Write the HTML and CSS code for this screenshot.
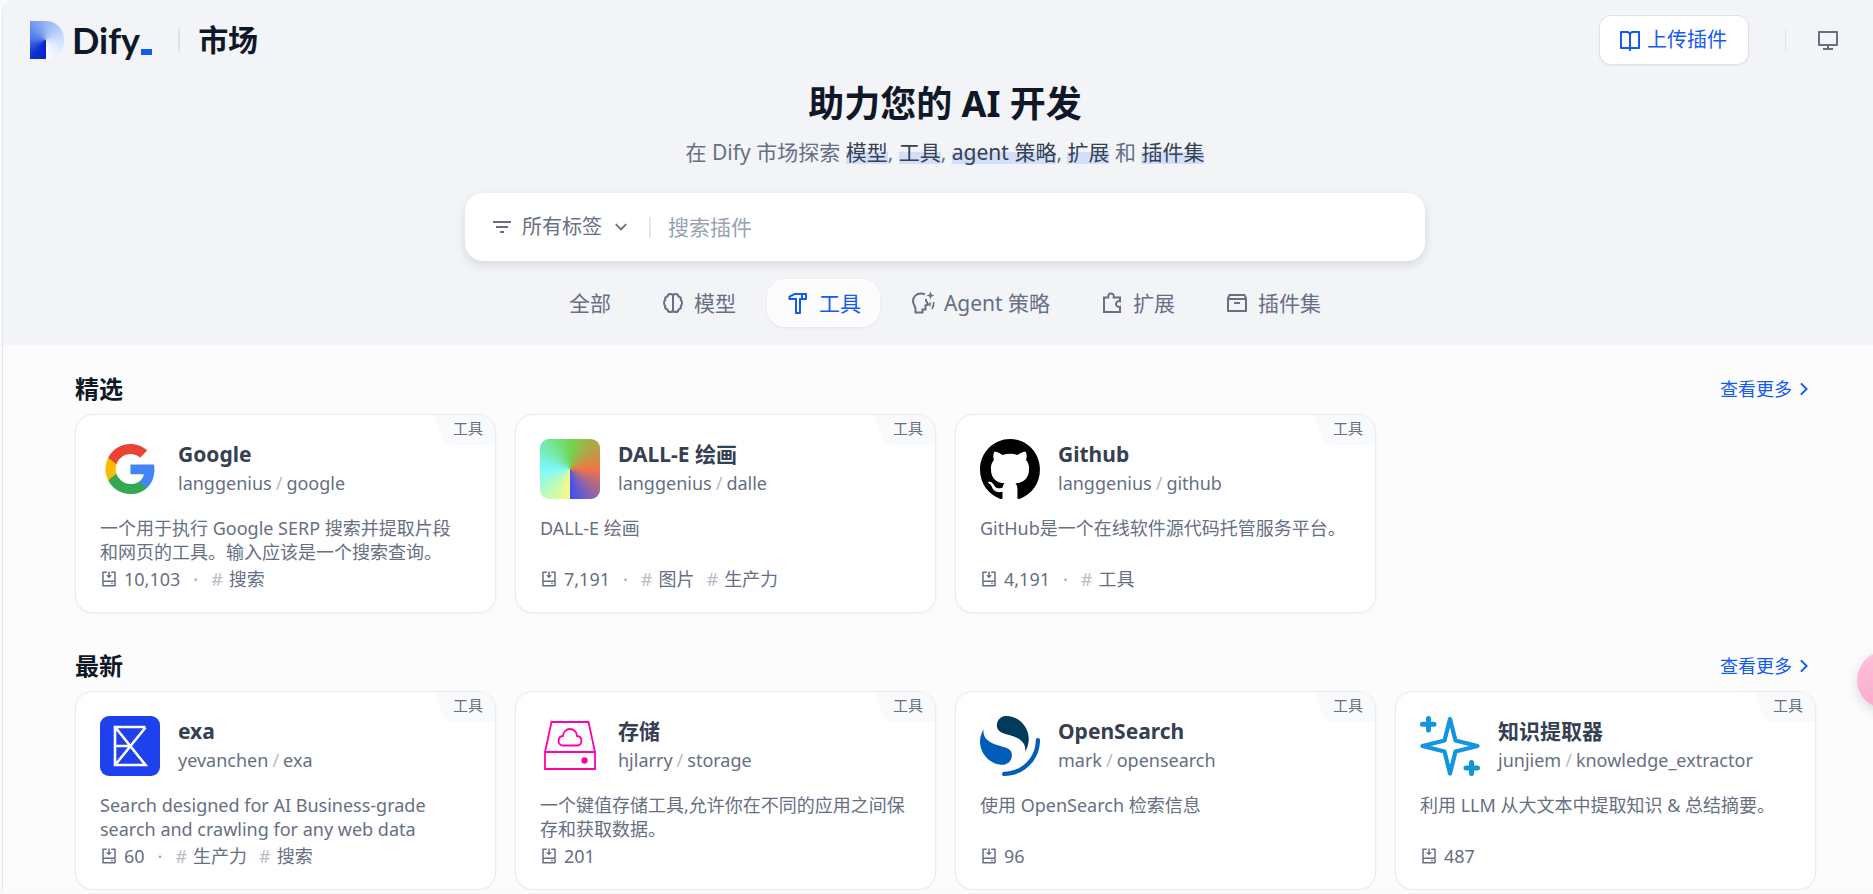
FILE: index.html
```html
<!DOCTYPE html>
<html lang="zh-Hans">
<head>
  <meta charset="UTF-8">
  <meta name="viewport" content="width=device-width, initial-scale=1">
  <title>Dify 市场</title>
  <link rel="stylesheet" href="styles.css">
</head>
<body>

<svg class="sprite" aria-hidden="true">
  <symbol id="install" viewBox="0 0 24 24">
    <path d="M9 2V4H5V14H19V4H15V2H20C20.55 2 21 2.45 21 3V21C21 21.55 20.55 22 20 22H4C3.45 22 3 21.55 3 21V3C3 2.45 3.45 2 4 2H9ZM19 16H5V20H19V16ZM17 17V19H15V17H17ZM13 2V7H16L12 11L8 7H11V2H13Z"/>
  </symbol>
  <symbol id="arrow-right" viewBox="0 0 24 24">
    <path d="M13.17 12L8.22 7.05L9.64 5.64L16 12L9.64 18.36L8.22 16.95L13.17 12Z"/>
  </symbol>
  <symbol id="corner" viewBox="0 0 20 30">
    <path d="M0 0H20V30H18C14 30 12 28 10 24Z"/>
  </symbol>
</svg>

<div class="page">
  <div class="top">
    <header class="header">
      <a class="logo" href="#">
        <span class="logo-mark"></span>
        <span class="logo-text">Dify</span>
        <span class="logo-dash"></span>
      </a>
      <span class="header-line"></span>
      <span class="market">市场</span>
      <div class="header-right">
        <button class="upload" type="button">
          <svg class="icon" viewBox="0 0 24 24"><path d="M13 21V23H11V21H3C2.45 21 2 20.55 2 20V4C2 3.45 2.45 3 3 3H9C10.19 3 11.27 3.52 12 4.35C12.73 3.52 13.81 3 15 3H21C21.55 3 22 3.45 22 4V20C22 20.55 21.55 21 21 21H13ZM20 19V5H15C13.9 5 13 5.9 13 7V19H20ZM11 19V7C11 5.9 10.1 5 9 5H4V19H11Z"/></svg>
          上传插件
        </button>
        <span class="header-line thin"></span>
        <button class="theme" type="button" aria-label="主题">
          <svg class="icon" viewBox="0 0 24 24"><path d="M4 16H20V5H4V16ZM13 18V20H17V22H7V20H11V18H2.99C2.44 18 2 17.55 2 16.99V4.01C2 3.45 2.46 3 2.99 3H21.01C21.56 3 22 3.45 22 4.01V16.99C22 17.55 21.54 18 21.01 18H13Z"/></svg>
        </button>
      </div>
    </header>

    <div class="hero">
      <h1>助力您的 AI 开发</h1>
      <p class="subtitle">在 Dify 市场探索 <em>模型</em>, <em>工具</em>, <em>agent 策略</em>, <em>扩展</em> 和 <em>插件集</em></p>

      <div class="search">
        <button class="tags-button" type="button">
          <svg class="icon" viewBox="0 0 24 24"><path d="M10 18H14V16H10V18ZM3 6V8H21V6H3ZM6 13H18V11H6V13Z"/></svg>
          所有标签
          <svg class="icon small" viewBox="0 0 24 24"><path d="M12 13.17L16.95 8.22L18.36 9.64L12 16L5.64 9.64L7.05 8.22L12 13.17Z"/></svg>
        </button>
        <span class="search-line"></span>
        <input type="text" placeholder="搜索插件" aria-label="搜索插件">
      </div>

      <nav class="tabs">
        <button type="button">全部</button>
        <button type="button">
          <svg class="icon line" viewBox="0 0 24 24"><path d="M12 5C12 3.6 10.8 3 9.5 3C7.8 3 6.6 4 6.4 5.5C4.6 6 3.8 7.4 4.2 9C2.6 10.3 2.6 13.7 4.2 15C3.8 16.6 4.6 18 6.4 18.5C6.6 20 7.8 21 9.5 21C10.8 21 12 20.4 12 19ZM12 5C12 3.6 13.2 3 14.5 3C16.2 3 17.4 4 17.6 5.5C19.4 6 20.2 7.4 19.8 9C21.4 10.3 21.4 13.7 19.8 15C20.2 16.6 19.4 18 17.6 18.5C17.4 20 16.2 21 14.5 21C13.2 21 12 20.4 12 19"/></svg>
          模型
        </button>
        <button class="active" type="button">
          <svg class="icon" viewBox="0 0 24 24"><path d="M20 2C20.55 2 21 2.45 21 3V8C21 8.55 20.55 9 20 9H15V22C15 22.55 14.55 23 14 23H10C9.45 23 9 22.55 9 22V9H3.5C2.95 9 2.5 8.55 2.5 8V5.62C2.5 5.24 2.71 4.89 3.05 4.72L8.5 2H20ZM15 4H8.97L4.5 6.24V7H11V21H13V7H15V4ZM19 4H17V7H19V4Z"/></svg>
          工具
        </button>
        <button type="button">
          <svg class="icon line" viewBox="0 0 24 24"><path d="M14 3.4C12.8 2.8 11.6 2.5 10 2.5C5.5 2.5 2 5.7 2 10C2 13.5 4.5 14.8 4.5 18V21.5H11.500V18.5H14.500V14.500L17 13.500L15 9.500V8"/><path class="arcs" d="M19 11.500C19.300 12.800 19.200 14 18.600 15.200M22.700 11C22.900 13.700 22.300 16 21 18"/><path class="solid" d="M19.500 .500L20.600 3.400L23.500 4.500L20.600 5.600L19.500 8.500L18.400 5.600L15.500 4.500L18.400 3.400Z"/></svg>
          Agent 策略
        </button>
        <button type="button">
          <svg class="icon line" viewBox="0 0 24 24"><path d="M4 6.5H8.3C7.8 3.9 9 2.5 11 2.5S14.2 3.9 13.7 6.5H20V10.2C17.6 9.8 16 11 16 13S17.6 16.2 20 15.8V21H4Z"/></svg>
          扩展
        </button>
        <button type="button">
          <svg class="icon" viewBox="0 0 24 24"><path d="M20 3L22 7V20C22 20.55 21.55 21 21 21H3C2.45 21 2 20.55 2 20V7L4 3H20ZM20 9H4V19H20V9ZM18.76 5H5.24L4.24 7H19.76L18.76 5ZM9 11H15V13H9Z"/></svg>
          插件集
        </button>
      </nav>
    </div>
  </div>

  <main class="content">
    <section>
      <div class="section-head">
        <h2>精选</h2>
        <a href="#">查看更多 <svg><use href="#arrow-right"/></svg></a>
      </div>
      <div class="cards">
        <article class="card">
          <div class="badge"><svg><use href="#corner"/></svg><span>工具</span></div>
          <div class="card-head">
            <svg class="card-icon" viewBox="-1.4 -1.2 26.4 26.4">
              <path fill="#4285f4" d="M22.56 12.25c0-.78-.07-1.53-.2-2.25H12v4.26h5.92c-.26 1.37-1.04 2.53-2.21 3.31v2.77h3.57c2.08-1.92 3.28-4.74 3.28-8.09z"/>
              <path fill="#34a853" d="M12 23c2.97 0 5.46-.98 7.28-2.66l-3.57-2.77c-.98.66-2.23 1.06-3.71 1.06-2.86 0-5.29-1.93-6.16-4.53H2.18v2.84C3.99 20.53 7.7 23 12 23z"/>
              <path fill="#fbbc05" d="M5.84 14.09c-.22-.66-.35-1.36-.35-2.09s.13-1.43.35-2.09V7.07H2.18C1.43 8.55 1 10.22 1 12s.43 3.45 1.18 4.93l3.66-2.84z"/>
              <path fill="#ea4335" d="M12 5.38c1.62 0 3.06.56 4.21 1.64l3.15-3.15C17.45 2.09 14.97 1 12 1 7.7 1 3.99 3.47 2.18 7.07l3.66 2.84c.87-2.6 3.3-4.53 6.16-4.53z"/>
            </svg>
            <div>
              <h3>Google</h3>
              <p class="org">langgenius<i>/</i>google</p>
            </div>
          </div>
          <p class="desc">一个用于执行 Google SERP 搜索并提取片段和网页的工具。输入应该是一个搜索查询。</p>
          <div class="meta"><svg><use href="#install"/></svg>10,103<span class="dot">·</span><span class="tag"><i>#</i>搜索</span></div>
        </article>

        <article class="card">
          <div class="badge"><svg><use href="#corner"/></svg><span>工具</span></div>
          <div class="card-head">
            <div class="card-icon dalle"></div>
            <div>
              <h3>DALL-E 绘画</h3>
              <p class="org">langgenius<i>/</i>dalle</p>
            </div>
          </div>
          <p class="desc">DALL-E 绘画</p>
          <div class="meta"><svg><use href="#install"/></svg>7,191<span class="dot">·</span><span class="tag"><i>#</i>图片</span><span class="tag"><i>#</i>生产力</span></div>
        </article>

        <article class="card">
          <div class="badge"><svg><use href="#corner"/></svg><span>工具</span></div>
          <div class="card-head">
            <svg class="card-icon" viewBox="0 0 97.7 96" preserveAspectRatio="none">
              <path d="M48.854 0C21.839 0 0 22 0 49.217c0 21.756 13.993 40.172 33.405 46.69 2.427.49 3.316-1.059 3.316-2.362 0-1.141-.08-5.052-.08-9.127-13.59 2.934-16.42-5.867-16.42-5.867-2.184-5.704-5.42-7.17-5.42-7.17-4.448-3.015.324-3.015.324-3.015 4.934.326 7.523 5.052 7.523 5.052 4.367 7.496 11.404 5.378 14.235 4.074.404-3.178 1.699-5.378 3.074-6.6-10.839-1.141-22.243-5.378-22.243-24.283 0-5.378 1.94-9.778 5.014-13.2-.485-1.222-2.184-6.275.486-13.038 0 0 4.125-1.304 13.426 5.052a46.97 46.97 0 0 1 12.214-1.63c4.125 0 8.33.571 12.213 1.63 9.302-6.356 13.427-5.052 13.427-5.052 2.67 6.763.97 11.816.485 13.038 3.155 3.422 5.015 7.822 5.015 13.2 0 18.905-11.404 23.06-22.324 24.283 1.78 1.548 3.316 4.481 3.316 9.126 0 6.6-.08 11.897-.08 13.526 0 1.304.89 2.853 3.316 2.364 19.412-6.52 33.405-24.935 33.405-46.691C97.707 22 75.788 0 48.854 0z"/>
            </svg>
            <div>
              <h3>Github</h3>
              <p class="org">langgenius<i>/</i>github</p>
            </div>
          </div>
          <p class="desc">GitHub是一个在线软件源代码托管服务平台。</p>
          <div class="meta"><svg><use href="#install"/></svg>4,191<span class="dot">·</span><span class="tag"><i>#</i>工具</span></div>
        </article>
      </div>
    </section>

    <section>
      <div class="section-head">
        <h2>最新</h2>
        <a href="#">查看更多 <svg><use href="#arrow-right"/></svg></a>
      </div>
      <div class="cards">
        <article class="card">
          <div class="badge"><svg><use href="#corner"/></svg><span>工具</span></div>
          <div class="card-head">
            <svg class="card-icon" viewBox="0 0 60 60">
              <rect width="60" height="60" rx="9" fill="#1f40ed"/>
              <path d="M45.5 11H15V49H45.5L15.5 11.5M45.5 11.5L15.5 48.5M15 30H30" fill="none" stroke="#fff" stroke-width="2.6"/>
            </svg>
            <div>
              <h3>exa</h3>
              <p class="org">yevanchen<i>/</i>exa</p>
            </div>
          </div>
          <p class="desc">Search designed for AI Business-grade search and crawling for any web data</p>
          <div class="meta"><svg><use href="#install"/></svg>60<span class="dot">·</span><span class="tag"><i>#</i>生产力</span><span class="tag"><i>#</i>搜索</span></div>
        </article>

        <article class="card">
          <div class="badge"><svg><use href="#corner"/></svg><span>工具</span></div>
          <div class="card-head">
            <svg class="card-icon" viewBox="0 0 60 60">
              <path d="M5 36L11.5 6H48.5L55 36V53H5V36H55M22.5 29.5A4.8 4.8 0 0 1 23 20A7 7 0 0 1 37 20A4.8 4.8 0 0 1 37.5 29.5Z" fill="none" stroke="#f0a" stroke-width="1.8"/>
              <circle cx="44.5" cy="44.5" r="3.2" fill="#f0a"/>
            </svg>
            <div>
              <h3>存储</h3>
              <p class="org">hjlarry<i>/</i>storage</p>
            </div>
          </div>
          <p class="desc">一个键值存储工具,允许你在不同的应用之间保存和获取数据。</p>
          <div class="meta"><svg><use href="#install"/></svg>201</div>
        </article>

        <article class="card">
          <div class="badge"><svg><use href="#corner"/></svg><span>工具</span></div>
          <div class="card-head">
            <svg class="card-icon" viewBox="0 0 64 64">
              <path fill="#005eb8" d="M61.737 23.5C60.488 23.5 59.475 24.513 59.475 25.763C59.475 44.381 44.381 59.475 25.763 59.475C24.513 59.475 23.5 60.488 23.5 61.737C23.5 62.987 24.513 64 25.763 64C46.88 64 64 46.88 64 25.763C64 24.513 62.987 23.5 61.737 23.5Z"/>
              <path fill="#003b5c" d="M48.081 38C50.257 34.45 52.361 29.718 51.947 23.092C51.09 9.367 38.659 -1.045 26.921 .084C22.325 .525 17.607 4.271 18.026 10.98C18.208 13.896 19.635 15.617 21.954 16.94C24.162 18.199 26.998 18.997 30.213 19.901C34.096 20.993 38.601 22.22 42.063 24.772C46.212 27.83 49.049 31.374 48.081 38Z"/>
              <path fill="#005eb8" d="M3.919 14C1.743 17.55 -.362 22.282 .052 28.908C.91 42.633 13.341 53.045 25.079 51.916C29.675 51.475 34.393 47.729 33.974 41.02C33.792 38.104 32.365 36.383 30.046 35.06C27.838 33.801 25.002 33.003 21.787 32.099C17.904 31.007 13.399 29.78 9.937 27.228C5.787 24.17 2.951 20.626 3.919 14Z"/>
            </svg>
            <div>
              <h3>OpenSearch</h3>
              <p class="org">mark<i>/</i>opensearch</p>
            </div>
          </div>
          <p class="desc">使用 OpenSearch 检索信息</p>
          <div class="meta"><svg><use href="#install"/></svg>96</div>
        </article>

        <article class="card">
          <div class="badge"><svg><use href="#corner"/></svg><span>工具</span></div>
          <div class="card-head">
            <svg class="card-icon" viewBox="0 0 60 60">
              <g fill="none" stroke="#1296db" stroke-linecap="round" stroke-linejoin="round">
                <path stroke-width="4.2" d="M30 3L35.5 24.5L57.5 30L35.5 35.5L30 57.5L24.5 35.5L2.5 30L24.5 24.5Z"/>
                <path stroke-width="5" d="M8.5 2.5V14M2.5 8.3H14M51.5 46.5V57.5M46 52H57.5"/>
              </g>
            </svg>
            <div>
              <h3>知识提取器</h3>
              <p class="org">junjiem<i>/</i>knowledge_extractor</p>
            </div>
          </div>
          <p class="desc">利用 LLM 从大文本中提取知识 &amp; 总结摘要。</p>
          <div class="meta"><svg><use href="#install"/></svg>487</div>
        </article>
      </div>
    </section>
  </main>
</div>

<button class="floating" type="button" aria-label="助手"></button>

</body>
</html>
```
FILE: styles.css
```css
* {
  box-sizing: border-box;
}

body {
  margin: 0;
  background: #f9fafb;
  color: #676f83;
  font-family: "Noto Sans", "Noto Sans CJK SC", sans-serif;
  font-size: 18px;
  line-height: 24px;
  overflow-x: hidden;
}

h1, h2, h3, p {
  margin: 0;
}

a {
  color: inherit;
  text-decoration: none;
}

button {
  display: flex;
  align-items: center;
  padding: 0;
  border: none;
  background: none;
  color: inherit;
  font: inherit;
  cursor: pointer;
}

svg {
  flex: none;
  fill: currentColor;
}

.sprite {
  display: none;
}

.icon {
  width: 24px;
  height: 24px;
}

.icon.small {
  width: 22px;
  height: 22px;
}

.icon.line {
  fill: none;
  stroke: currentColor;
  stroke-width: 2;
  overflow: visible;
}

.icon .arcs {
  stroke-width: 1.6;
}

.icon .solid {
  fill: currentColor;
  stroke: none;
}

.page {
  margin-left: 2px;
  border-left: 1px solid #e4e6ea;
  border-top-left-radius: 12px;
  background: #fcfcfd;
  overflow: hidden;
}

.top {
  background: #f2f4f7;
}

/* header */
.header {
  display: flex;
  align-items: center;
  height: 80px;
  padding: 0 33px 0 27px;
}

.logo {
  display: flex;
  align-items: center;
}

.logo-mark {
  width: 34px;
  height: 38px;
  border-radius: 0 18px 18px 0;
  background: conic-gradient(from 180deg at 46% 50%, #0721c8, #0f2fd2 40deg, #4d72e2 90deg, #6f95ee 135deg, #94b4f3 180deg, #cfe1fe 270deg, #eaf1ff 320deg, #fff 360deg);
}

.logo-text {
  margin-left: 8px;
  color: #101828;
  font-family: Lato, sans-serif;
  font-size: 36px;
  font-weight: bold;
  line-height: 38px;
}

.logo-dash {
  align-self: flex-end;
  width: 11px;
  height: 6px;
  margin: 0 0 4px 1px;
  background: #155aef;
}

.header-line {
  width: 2px;
  height: 24px;
  margin: 0 18px 0 26px;
  background: #e0e2e7;
}

.header-line.thin {
  width: 1px;
  height: 21px;
  margin: 0 30px 0 36px;
}

.market {
  color: #101828;
  font-size: 30px;
  font-weight: bold;
  line-height: 40px;
}

.header-right {
  display: flex;
  align-items: center;
  margin-left: auto;
}

.upload {
  gap: 5px;
  height: 50px;
  padding: 0 21px 0 18px;
  border: 1px solid #dfe1e6;
  border-radius: 12px;
  background: #fff;
  box-shadow: 0 1px 2px rgba(16, 24, 40, 0.05);
  color: #155aef;
  font-size: 20px;
}

/* hero */
.hero {
  display: flex;
  flex-direction: column;
  align-items: center;
  padding: 0 0 18px 14px;
}

.hero h1 {
  color: #101828;
  font-size: 36px;
  line-height: 48px;
}

.subtitle {
  margin-top: 9px;
  font-size: 21px;
  line-height: 30px;
}

.subtitle em {
  background: linear-gradient(transparent 50%, #d1dff9 50%, #d1dff9 92%, transparent 92%);
  color: #354052;
  font-style: normal;
}

.search {
  display: flex;
  align-items: center;
  width: 100%;
  max-width: 960px;
  height: 68px;
  margin-top: 26px;
  padding: 0 18px 0 25px;
  border-radius: 18px;
  background: #fff;
  box-shadow: 0 4px 10px rgba(16, 24, 40, 0.12);
}

.tags-button {
  gap: 8px;
  font-size: 20px;
}

.search-line {
  width: 2px;
  height: 21px;
  margin: 0 17px;
  background: #e6e8ec;
}

.search input {
  flex: 1;
  min-width: 0;
  padding: 0;
  border: none;
  outline: none;
  background: none;
  color: #354052;
  font: inherit;
  font-size: 21px;
}

.search input::placeholder {
  color: #98a2b3;
}

.tabs {
  display: flex;
  gap: 12px;
  margin-top: 18px;
}

.tabs button {
  gap: 9px;
  height: 48px;
  padding: 0 18px;
  border: 1px solid transparent;
  border-radius: 18px;
  font-size: 21px;
}

.tabs .active {
  background: #fcfcfd;
  border-color: #fff;
  box-shadow: 0 1px 3px rgba(16, 24, 40, 0.06);
  color: #155aef;
}

/* plugin lists */
.content {
  display: flex;
  flex-direction: column;
  gap: 37px;
  padding: 28px 57px 0 72px;
}

.section-head {
  display: flex;
  align-items: center;
  justify-content: space-between;
  height: 32px;
  margin-bottom: 9px;
}

.section-head h2 {
  color: #101828;
  font-size: 24px;
  line-height: 32px;
}

.section-head a {
  display: flex;
  align-items: center;
  color: #155aef;
}

.section-head svg {
  width: 24px;
  height: 24px;
}

.cards {
  display: grid;
  grid-template-columns: repeat(4, 1fr);
  gap: 19px;
}

.card {
  position: relative;
  padding: 24px 24px 21px;
  border: 1px solid #eaecf0;
  border-radius: 18px;
  background: #fff;
  box-shadow: 0 1px 3px rgba(16, 24, 40, 0.05);
  overflow: hidden;
}

.badge {
  position: absolute;
  top: 0;
  right: 0;
  display: flex;
  color: #f9fafb;
}

.badge svg {
  width: 20px;
  height: 30px;
}

.badge span {
  padding: 0 12px 4px 0;
  background: #f9fafb;
  color: #676f83;
  font-size: 15px;
  line-height: 26px;
}

.card-head {
  display: flex;
  gap: 18px;
}

.card-icon {
  width: 60px;
  height: 60px;
  color: #000;
}

.dalle {
  border-radius: 9px;
  background: conic-gradient(#70d750, #f27442 90deg, #8a62b0 140deg, #3e4ff5 180deg, #fbfb7c 180deg, #7cf9ff 270deg, #70d750 360deg);
}

.card h3 {
  color: #354052;
  font-size: 21px;
  line-height: 30px;
}

.org {
  margin-top: 2px;
}

.org i, .tag i {
  color: #b8bcc6;
  font-style: normal;
}

.org i {
  margin: 0 4px;
}

.desc {
  height: 48px;
  margin-top: 17px;
  padding-right: 4px;
  overflow: hidden;
}

.meta {
  display: flex;
  align-items: center;
  margin-top: 3px;
}

.meta svg {
  width: 18px;
  height: 18px;
  margin-right: 6px;
}

.dot {
  margin: 0 13px;
  color: #98a2b3;
}

.tag i {
  margin-right: 6px;
}

.tag + .tag {
  margin-left: 12px;
}

.floating {
  position: fixed;
  top: 651px;
  right: -42px;
  width: 58px;
  height: 58px;
  border-radius: 50%;
  background: linear-gradient(160deg, #ffc2dc, #fba3c8);
  box-shadow: 0 4px 12px rgba(16, 24, 40, 0.15);
}
```
